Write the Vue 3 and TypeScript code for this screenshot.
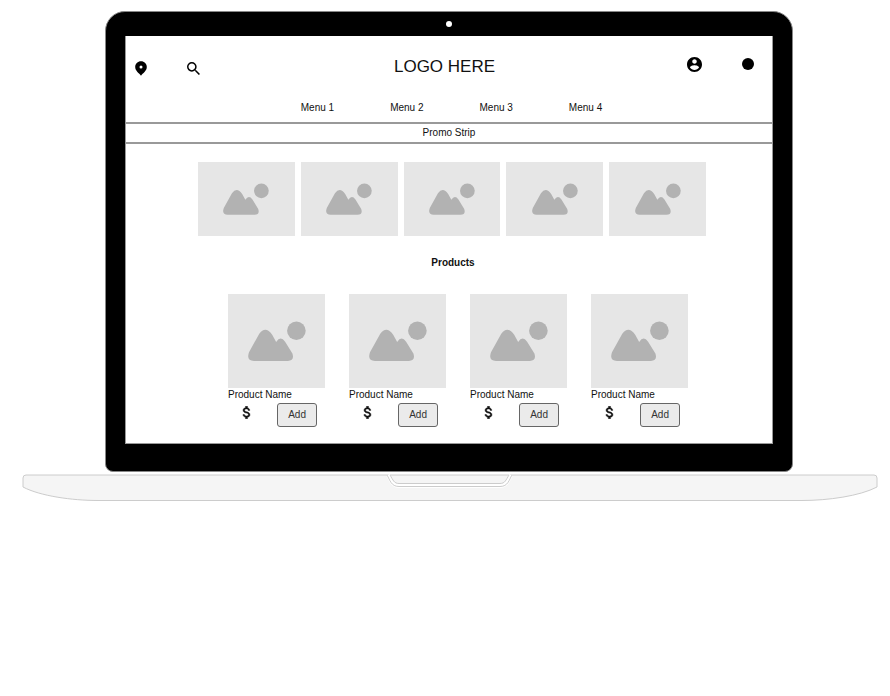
<script setup lang="ts">
interface Product {
  id: number
  name: string
}

const menuItems: string[] = ['Menu 1', 'Menu 2', 'Menu 3', 'Menu 4']
const banners: number[] = [1, 2, 3, 4, 5]
const products: Product[] = [1, 2, 3, 4].map((id) => ({ id, name: 'Product Name' }))
</script>

<template>
  <div class="page">
    <div class="lid">
      <div class="camera-bar"><span class="camera"></span></div>
      <div class="screen">
        <header class="header">
          <div class="tools tools-left">
            <button class="icon-button" type="button" aria-label="Location">
              <svg width="12" height="15" viewBox="0 0 12 15">
                <path fill-rule="evenodd" d="M6 .3C2.7.3.2 2.8.2 6c0 3.900 4 6.300 5.800 8.700C7.800 12.300 11.800 9.900 11.800 6 11.800 2.800 9.300.3 6 .3zM6 4.500a1.500 1.500 0 1 1 0 3 1.500 1.500 0 0 1 0-3z" />
              </svg>
            </button>
            <button class="icon-button" type="button" aria-label="Search">
              <svg width="13" height="13" viewBox="3 3 17.5 17.5">
                <path d="M15.500 14h-.79l-.28-.27A6.471 6.471 0 0 0 16 9.500 6.500 6.500 0 1 0 9.500 16c1.610 0 3.090-.59 4.230-1.570l.27.28v.79l5 4.990L20.490 19l-4.990-5zm-6 0C7.010 14 5 11.990 5 9.500S7.010 5 9.500 5 14 7.010 14 9.500 11.990 14 9.500 14z" />
              </svg>
            </button>
          </div>
          <h1 class="logo">LOGO HERE</h1>
          <div class="tools tools-right">
            <button class="icon-button" type="button" aria-label="Account">
              <svg width="15" height="15" viewBox="2 2 20 20">
                <path d="M12 2C6.480 2 2 6.480 2 12s4.480 10 10 10 10-4.480 10-10S17.520 2 12 2zm0 3c1.660 0 3 1.340 3 3s-1.340 3-3 3-3-1.340-3-3 1.340-3 3-3zm0 14.200c-2.500 0-4.710-1.280-6-3.220.030-1.990 4-3.080 6-3.080 1.990 0 5.970 1.090 6 3.080-1.290 1.940-3.500 3.220-6 3.220z" />
              </svg>
            </button>
            <button class="icon-button" type="button" aria-label="Cart">
              <svg width="12" height="12" viewBox="0 0 12 12"><circle cx="6" cy="6" r="6" /></svg>
            </button>
          </div>
        </header>

        <nav class="menu" aria-label="Main">
          <a v-for="item in menuItems" :key="item" href="#">{{ item }}</a>
        </nav>

        <p class="promo">Promo Strip</p>

        <section class="banners">
          <div v-for="banner in banners" :key="banner" class="placeholder banner">
            <svg class="picture" viewBox="0 0 175 120">
              <path d="M34 38Q53 12 73 41L85 63Q98 43 112 62L134 98Q141 120 120 120H18Q-6 119 3 94Z" />
              <circle cx="146" cy="29" r="28" />
            </svg>
          </div>
        </section>

        <h2 class="title">Products</h2>

        <section class="products">
          <article v-for="product in products" :key="product.id" class="product">
            <div class="placeholder photo">
              <svg class="picture" viewBox="0 0 175 120">
                <path d="M34 38Q53 12 73 41L85 63Q98 43 112 62L134 98Q141 120 120 120H18Q-6 119 3 94Z" />
                <circle cx="146" cy="29" r="28" />
              </svg>
            </div>
            <h3 class="name">{{ product.name }}</h3>
            <div class="buy">
              <svg class="price" width="9" height="13" viewBox="5 3 13 18">
                <path d="M11.800 10.900c-2.270-.59-3-1.200-3-2.150 0-1.090 1.010-1.850 2.700-1.850 1.780 0 2.440.85 2.500 2.100h2.210c-.070-1.720-1.120-3.300-3.210-3.810V3h-3v2.160c-1.940.42-3.500 1.680-3.500 3.610 0 2.310 1.910 3.460 4.700 4.130 2.500.6 3 1.480 3 2.410 0 .69-.49 1.790-2.700 1.790-2.060 0-2.870-.92-2.980-2.100h-2.200c.12 2.190 1.760 3.420 3.680 3.830V21h3v-2.150c1.950-.37 3.500-1.500 3.500-3.550 0-2.840-2.430-3.810-4.700-4.400z" />
              </svg>
              <button class="add" type="button">Add</button>
            </div>
          </article>
        </section>
      </div>
    </div>

    <svg class="base" viewBox="0 0 856 28">
      <path class="base-body" d="M1 4Q1 1 4 1H852Q855 1 855 4V13C838 22 806 26.500 780 26.500H76C50 26.500 18 22 1 13Z" />
      <path class="gap" d="M366 1C369 6 370 12 377 12H478C485 12 486 6 489 1" />
      <path class="edge" d="M365 1C368 6 369 12.500 377 12.500H478C486 12.500 487 6 490 1" />
      <path class="edge" d="M368 1C371 6 372 9.500 377 9.500H478C483 9.500 484 6 487 1" />
    </svg>
  </div>
</template>

<style>
body {
  margin: 0;
  background: #fff;
}
</style>

<style scoped>
.page {
  padding: 11px 12px 0 22px;
  font-family: "Liberation Sans", Arial, sans-serif;
  font-size: 10px;
  line-height: 12px;
  color: #111;
}

.lid {
  margin: 0 85px 0 83px;
  padding: 0 19px 27px;
  background: #000;
  border: 1px solid #888;
  border-radius: 20px 20px 8px 8px;
}

.camera-bar {
  display: flex;
  justify-content: center;
  align-items: center;
  height: 24px;
}

.camera {
  width: 6px;
  height: 6px;
  border-radius: 50%;
  background: #fff;
}

.screen {
  padding-bottom: 16px;
  background: #fff;
  border: 1px solid #999;
  border-top: 0;
}

.header {
  display: grid;
  grid-template-columns: 1fr auto 1fr;
  align-items: center;
  height: 62px;
  padding: 0 18px 0 9px;
}

.tools {
  display: flex;
  align-items: center;
  gap: 40px;
}

.tools-left {
  padding-top: 2px;
}

.tools-right {
  justify-content: flex-end;
  padding-bottom: 6px;
}

.icon-button {
  display: flex;
  padding: 0;
  border: 0;
  background: none;
}

.logo {
  margin: 0;
  font-size: 17px;
  line-height: 20px;
  font-weight: 400;
}

.menu {
  display: flex;
  justify-content: center;
  gap: 56px;
  padding: 4px 0 8px 5px;
}

.menu a {
  color: inherit;
  text-decoration: none;
}

.promo {
  margin: 0;
  padding: 3px 0;
  border: solid #999;
  border-width: 2px 0;
  text-align: center;
}

.banners {
  display: grid;
  grid-template-columns: repeat(5, 1fr);
  gap: 6px;
  padding: 18px 66px 0 72px;
}

.placeholder {
  display: flex;
  justify-content: center;
  align-items: center;
  background: #e6e6e6;
}

.picture {
  fill: #b2b2b2;
}

.banner {
  height: 74px;
}

.banner .picture {
  width: 46px;
  height: 32px;
}

.title {
  margin: 0;
  padding: 21px 0 25px 8px;
  font-size: 10px;
  line-height: 12px;
  text-align: center;
}

.products {
  display: grid;
  grid-template-columns: repeat(4, 1fr);
  gap: 24px;
  padding: 0 84px 0 102px;
}

.photo {
  height: 94px;
}

.photo .picture {
  width: 58px;
  height: 40px;
}

.name {
  margin: 0;
  padding-top: 1px;
  font-size: 10px;
  line-height: 12px;
  font-weight: 400;
}

.buy {
  display: flex;
  align-items: flex-start;
  justify-content: space-between;
  padding: 2px 8px 0 14px;
}

.price {
  padding-top: 3px;
  fill: #111;
  stroke: #111;
  stroke-width: 0.6;
}

.add {
  padding: 5px 10px;
  font: inherit;
  line-height: 12px;
  color: #333;
  background: #ebebeb;
  border: 1px solid #666;
  border-radius: 3px;
}

.base {
  display: block;
  width: 100%;
  margin-top: 2px;
  fill: none;
}

.base-body {
  fill: #f5f5f5;
  stroke: #ccc;
}

.gap {
  stroke: #fff;
  stroke-width: 4;
}

.edge {
  stroke: #ccc;
}
</style>
